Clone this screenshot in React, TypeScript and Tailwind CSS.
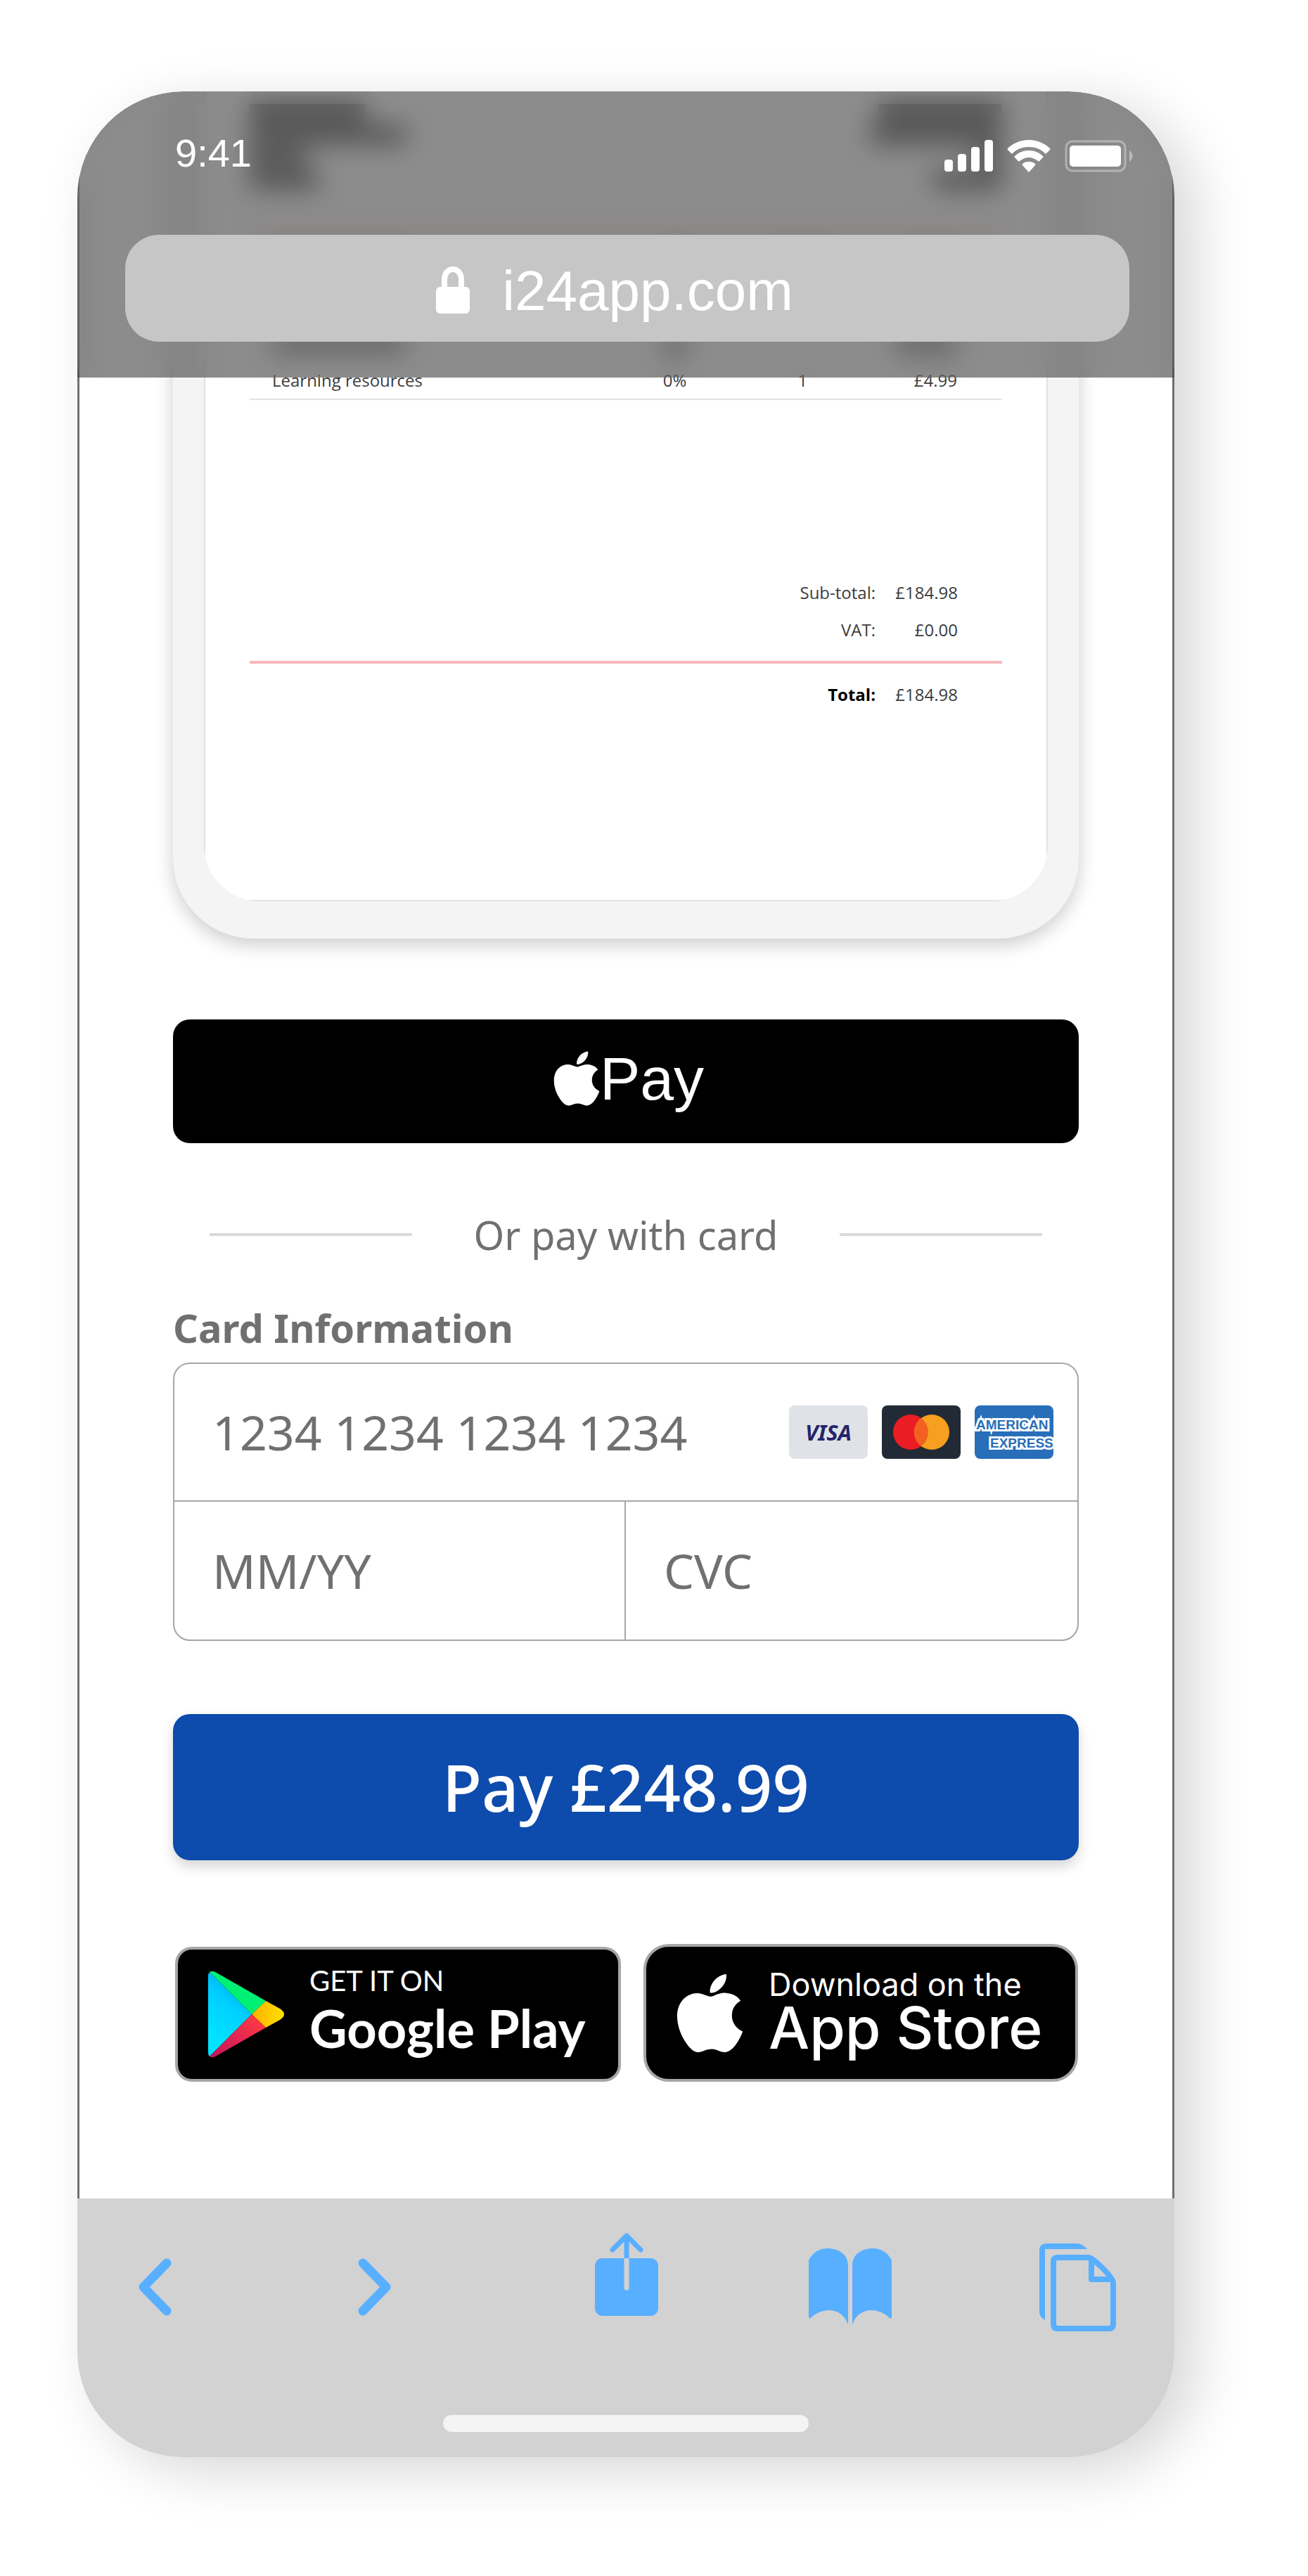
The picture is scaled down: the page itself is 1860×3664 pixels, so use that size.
import { useState } from 'react'
import { FaApple } from 'react-icons/fa'

interface InvoiceLine {
  id: string
  name: string
  vat: string
  qty: string
  amount: string
}

const lines: InvoiceLine[] = [
  { id: 'learning', name: 'Learning resources', vat: '0%', qty: '1', amount: '£4.99' },
]

function SignalIcon() {
  return (
    <svg className="h-[46px] w-[69px]" viewBox="0 0 69 46" fill="#fff" aria-hidden="true">
      <rect x="0" y="28" width="12" height="17" rx="4" />
      <rect x="19" y="20" width="12" height="25" rx="4" />
      <rect x="38" y="10" width="12" height="35" rx="4" />
      <rect x="57" y="0" width="12" height="45" rx="4" />
    </svg>
  )
}

function WifiIcon() {
  return (
    <svg className="h-[46px] w-[62px]" viewBox="0 0 62 46" fill="#fff" aria-hidden="true">
      <path d="M31 0C19 0 8 5 1 12Q0 13 1 14L6 19Q7 20 8 19C14 13 22 10 31 10C40 10 48 13 54 19Q55 20 56 19L61 14Q62 13 61 12C54 5 43 0 31 0Z" />
      <path d="M31 15C23 15 16 18 11 23Q10 24 11 25L16 30Q17 31 18 30C22 27 26 25 31 25C36 25 40 27 44 30Q45 31 46 30L51 25Q52 24 51 23C46 18 39 15 31 15Z" />
      <path d="M31 31C27 31 24 32 22 34Q21 35 22 36L30 45Q31 46 32 45L40 36Q41 35 40 34C38 32 35 31 31 31Z" />
    </svg>
  )
}

function BatteryIcon() {
  return (
    <svg className="h-[46px] w-[97px]" viewBox="0 0 97 46" fill="none" aria-hidden="true">
      <rect x="2" y="2" width="84" height="42" rx="9" stroke="#fff" strokeOpacity=".35" strokeWidth="3" />
      <rect x="7" y="8" width="73" height="30" rx="5" fill="#fff" />
      <path d="M92 15C98 19 98 27 92 31Z" fill="#fff" fillOpacity=".4" />
    </svg>
  )
}

function LockIcon() {
  return (
    <svg className="h-[68px] w-12" viewBox="0 0 48 68" fill="none" aria-hidden="true">
      <path d="M12 34V20C12 0 36 0 36 20V34" stroke="#fff" strokeWidth="8" />
      <rect x="0" y="30" width="48" height="38" rx="6" fill="#fff" />
    </svg>
  )
}

function VisaLogo() {
  return (
    <div className="flex h-[76px] w-28 items-center justify-center rounded-lg bg-[#dfe3e8]">
      <span className="text-[31px] leading-8 font-bold text-[#26246b] italic">VISA</span>
    </div>
  )
}

function MastercardLogo() {
  return (
    <svg className="h-[76px] w-28" viewBox="0 0 112 76" role="img" aria-label="Mastercard">
      <rect width="112" height="76" rx="8" fill="#222b35" />
      <circle cx="41" cy="38" r="25" fill="#eb1c24" />
      <circle cx="71" cy="38" r="25" fill="#f79f1f" />
      <path d="M56 18A25 25 0 0 1 56 58A25 25 0 0 1 56 18Z" fill="#f26122" />
    </svg>
  )
}

function AmexLogo() {
  return (
    <svg className="h-[76px] w-28" viewBox="0 0 112 76" role="img" aria-label="American Express">
      <rect width="112" height="76" rx="8" fill="#286eb8" />
      <g
        className="font-['Liberation_Sans',sans-serif] text-[19px] font-bold"
        fill="#286eb8"
        stroke="#fff"
        strokeWidth="6"
        paintOrder="stroke"
      >
        <text x="2" y="34">AMERICAN</text>
        <text x="22" y="60">EXPRESS</text>
      </g>
    </svg>
  )
}

function PlayIcon() {
  return (
    <svg className="h-[124px] w-[108px]" viewBox="0 0 108 124" aria-hidden="true">
      <defs>
        <linearGradient id="playBlue" x1="60" y1="10" x2="0" y2="90" gradientUnits="userSpaceOnUse">
          <stop offset="0" stopColor="#00a0ff" />
          <stop offset=".5" stopColor="#00d0ff" />
          <stop offset="1" stopColor="#00e3ff" />
        </linearGradient>
        <linearGradient id="playRed" x1="75" y1="68" x2="0" y2="124" gradientUnits="userSpaceOnUse">
          <stop offset="0" stopColor="#ff3a44" />
          <stop offset="1" stopColor="#c31162" />
        </linearGradient>
        <linearGradient id="playYellow" x1="108" y1="62" x2="60" y2="62" gradientUnits="userSpaceOnUse">
          <stop offset="0" stopColor="#ffe000" />
          <stop offset="1" stopColor="#ffb000" />
        </linearGradient>
      </defs>
      <path d="M2 2Q0 4 0 8V116Q0 120 2 122L62 62Z" fill="url(#playBlue)" />
      <path d="M2 2Q6 -1 12 3L82 43L62 62Z" fill="#00f076" />
      <path d="M82 43L102 54Q114 62 102 70L82 81L62 62Z" fill="url(#playYellow)" />
      <path d="M2 122Q6 125 12 121L82 81L62 62Z" fill="url(#playRed)" />
    </svg>
  )
}

function StatusBar() {
  return (
    <div className="flex h-[204px] items-start justify-between pt-14 pr-[59px] pl-[139px]">
      <span className="font-['Liberation_Sans',sans-serif] text-[56px] leading-[64px] text-white">9:41</span>
      <div className="flex h-[72px] items-center gap-5">
        <SignalIcon />
        <WifiIcon />
        <BatteryIcon />
      </div>
    </div>
  )
}

function BlurBar({ className }: { className: string }) {
  return <div className={`h-6 ${className}`} />
}

function Invoice() {
  return (
    <section className="rounded-b-[114px] bg-[#f4f4f4] px-11 pb-[53px] shadow-[0_9px_27px_rgba(0,0,0,0.2)]">
      <div className="overflow-hidden rounded-b-[80px] bg-white">
        <div className="border-x-2 border-b-2 border-[#e2e2e2] px-[63px] pt-[18px] pb-[276px] font-['Open_Sans',sans-serif] text-[24px] leading-8 text-[#3c3c3c]">
          {/* Address block, only seen through the frosted header */}
          <div className="flex justify-between" aria-hidden="true">
            <div className="flex flex-col gap-2">
              <BlurBar className="w-[165px] bg-[#7c7c7c]" />
              <BlurBar className="w-[222px] bg-[#8a8a8a]" />
              <BlurBar className="w-20 bg-[#8a8a8a]" />
              <BlurBar className="w-[98px] bg-[#8a8a8a]" />
            </div>
            <div className="flex flex-col items-end gap-2">
              <BlurBar className="w-44 bg-[#7c7c7c]" />
              <BlurBar className="w-[188px] bg-[#8a8a8a]" />
              <BlurBar className="w-10 bg-[#8a8a8a]" />
              <BlurBar className="w-[98px] bg-[#8a8a8a]" />
            </div>
          </div>

          <div className="mt-[60px] h-1 bg-[#f9a5a5]" />

          <table className="w-full table-fixed border-collapse">
            <colgroup>
              <col className="w-[48%]" />
              <col className="w-[17%]" />
              <col className="w-[17%]" />
              <col />
            </colgroup>
            <tbody>
              <tr className="h-[77px]" aria-hidden="true">
                <td className="pl-8"><BlurBar className="w-[190px] bg-[#aaa]" /></td>
                <td><BlurBar className="mx-auto w-10 bg-[#aaa]" /></td>
                <td><BlurBar className="mx-auto w-20 bg-[#aaa]" /></td>
                <td className="pr-16"><BlurBar className="ml-auto w-[70px] bg-[#aaa]" /></td>
              </tr>
              <tr className="h-[53px]">
                <td />
              </tr>
              <tr className="h-[53px]" aria-hidden="true">
                <td className="pl-8"><BlurBar className="w-[190px] bg-[#aaa]" /></td>
                <td><BlurBar className="mx-auto w-9 bg-[#aaa]" /></td>
                <td />
                <td className="pr-16"><BlurBar className="ml-auto w-[88px] bg-[#aaa]" /></td>
              </tr>
              {lines.map((line) => (
                <tr key={line.id} className="h-[53px] border-b-2 border-[#e4e4e4]">
                  <td className="pl-8">{line.name}</td>
                  <td className="text-center">{line.vat}</td>
                  <td className="text-center">{line.qty}</td>
                  <td className="pr-16 text-right">{line.amount}</td>
                </tr>
              ))}
            </tbody>
          </table>

          <dl className="mt-[258px] grid grid-cols-[1fr_117px] gap-y-[21px] pr-[63px] text-right">
            <dt>Sub-total:</dt>
            <dd>£184.98</dd>
            <dt>VAT:</dt>
            <dd>£0.00</dd>
          </dl>
          <div className="mt-7 h-1 bg-[#f9b9b9]" />
          <dl className="mt-7 grid grid-cols-[1fr_117px] pr-[63px] text-right">
            <dt className="font-bold text-black">Total:</dt>
            <dd>£184.98</dd>
          </dl>
        </div>
      </div>
    </section>
  )
}

function CardForm() {
  const [number, setNumber] = useState('')
  const [expiry, setExpiry] = useState('')
  const [cvc, setCvc] = useState('')

  const field = 'min-w-0 bg-transparent text-[68px] text-[#707070] outline-none placeholder:text-[#707070]'

  return (
    <>
      <label htmlFor="card-number" className="mt-14 block text-[56px] leading-[76px] font-bold text-[#707070]">
        Card Information
      </label>
      <div className="mt-3 rounded-3xl border-2 border-[#a6a6a6]">
        <div className="flex h-[196px] items-center gap-5 border-b-2 border-[#a6a6a6] pr-[34px] pl-[54px]">
          <input
            id="card-number"
            className={`${field} flex-1`}
            placeholder="1234 1234 1234 1234"
            value={number}
            onChange={(e) => setNumber(e.target.value)}
          />
          <VisaLogo />
          <MastercardLogo />
          <AmexLogo />
        </div>
        <div className="grid h-[196px] grid-cols-2">
          <input
            aria-label="Expiry date"
            className={`${field} border-r-2 border-[#a6a6a6] pl-[54px]`}
            placeholder="MM/YY"
            value={expiry}
            onChange={(e) => setExpiry(e.target.value)}
          />
          <input
            aria-label="Security code"
            className={`${field} pl-[54px]`}
            placeholder="CVC"
            value={cvc}
            onChange={(e) => setCvc(e.target.value)}
          />
        </div>
      </div>
    </>
  )
}

function StoreBadges() {
  return (
    <div className="mt-[119px] grid grid-cols-[634fr_618fr] items-end gap-8 pr-px pl-[3px] whitespace-nowrap text-white">
      <a
        href="#google-play"
        className="flex h-48 items-center gap-9 rounded-3xl border-4 border-[#a6a6a6] bg-black pl-[43px] font-['Lato',sans-serif]"
      >
        <PlayIcon />
        <span className="flex flex-col pb-2">
          <span className="text-[40px] leading-[48px]">GET IT ON</span>
          <span className="text-[74px] leading-[88px] font-bold">Google Play</span>
        </span>
      </a>
      <a
        href="#app-store"
        className="flex h-[196px] items-center gap-9 rounded-[36px] border-4 border-[#a6a6a6] bg-black pl-[43px] font-['Inter',sans-serif]"
      >
        <FaApple className="h-[127px] w-[95px]" />
        <span className="flex flex-col pb-1">
          <span className="text-[45px] leading-[48px]">Download on the</span>
          <span className="text-[82px] leading-[76px] font-medium">App Store</span>
        </span>
      </a>
    </div>
  )
}

function Toolbar() {
  return (
    <footer className="bg-[#d2d2d2] pb-9 text-[#58afff]">
      <nav className="grid h-[252px] grid-cols-[312fr_337fr_304fr_328fr_109fr] items-center justify-items-start pr-[83px] pl-[87px]">
        <button type="button" aria-label="Back">
          <svg className="h-[82px] w-[47px]" viewBox="0 0 47 82" fill="none" stroke="currentColor" strokeWidth="13" strokeLinecap="round" strokeLinejoin="round">
            <path d="M40 7L7 41L40 75" />
          </svg>
        </button>
        <button type="button" aria-label="Forward">
          <svg className="h-[82px] w-[47px]" viewBox="0 0 47 82" fill="none" stroke="currentColor" strokeWidth="13" strokeLinecap="round" strokeLinejoin="round">
            <path d="M7 7L40 41L7 75" />
          </svg>
        </button>
        <button type="button" aria-label="Share">
          <svg className="h-[154px] w-[90px]" viewBox="0 0 90 154" fill="none" strokeLinecap="round" strokeLinejoin="round">
            <rect x="0" y="36" width="90" height="82" rx="11" fill="currentColor" />
            <path d="M45 38V78" stroke="#d2d2d2" strokeWidth="7" />
            <path d="M45 36V5" stroke="currentColor" strokeWidth="7" strokeLinecap="butt" />
            <path d="M25 24L45 4L65 24" stroke="currentColor" strokeWidth="7" />
          </svg>
        </button>
        <button type="button" aria-label="Bookmarks">
          <svg className="h-[110px] w-[118px]" viewBox="0 0 118 110" fill="currentColor">
            <path d="M0 17C6 5 16 0 27 0C43 0 56 9 56 24V109C52 95 41 88 29 88C18 88 9 93 3 99Q0 101 0 97Z" />
            <path d="M118 17C112 5 102 0 91 0C75 0 62 9 62 24V109C66 95 77 88 89 88C100 88 109 93 115 99Q118 101 118 97Z" />
          </svg>
        </button>
        <button type="button" aria-label="Tabs">
          <svg className="h-[125px] w-[109px]" viewBox="0 0 109 125" fill="none" stroke="currentColor" strokeWidth="8">
            <path d="M0 10Q0 0 10 0H54Q60 0 68 8H8V109Q0 104 0 98Z" fill="currentColor" stroke="none" />
            <path d="M20 26Q20 20 26 20H70C76 20 105 48 105 56V115Q105 121 99 121H26Q20 121 20 115Z" />
            <path d="M74 21V51H104" strokeLinejoin="round" />
          </svg>
        </button>
      </nav>
      <div className="mx-auto mt-14 h-6 w-1/3 rounded-full bg-[#f4f4f4]" />
    </footer>
  )
}

export default function App() {
  return (
    <div className="min-h-screen bg-white pt-[130px] pr-[190px] pb-[170px] pl-[110px] font-['Noto_Sans','Open_Sans',sans-serif]">
      <div className="relative overflow-hidden rounded-[150px] shadow-[30px_20px_80px_rgba(0,0,0,0.16)]">
        {/* Browser header floats over the scrolled page */}
        <header className="absolute inset-x-0 top-0 z-10 bg-black/45 pb-[51px] backdrop-blur-[18px]">
          <StatusBar />
          <div className="mr-16 ml-[68px] flex h-[152px] items-center justify-center gap-[46px] rounded-[48px] bg-[#c6c6c6] pt-1 pr-9">
            <LockIcon />
            <span className="pt-1 font-['Liberation_Sans',sans-serif] text-[80px] leading-[92px] text-white">i24app.com</span>
          </div>
        </header>

        <main className="border-x-[3px] border-[#707070] bg-white px-[133px] pb-[166px]">
          <Invoice />

          <button
            type="button"
            aria-label="Apple Pay"
            className="mt-[115px] flex h-44 w-full items-center justify-center rounded-3xl bg-black pb-2 pl-2 text-white"
          >
            <FaApple className="h-[88px] w-[66px]" />
            <span className="font-['Liberation_Sans',sans-serif] text-[86px] leading-[100px]">Pay</span>
          </button>

          <div className="mt-[92px] flex items-center justify-between px-[52px]">
            <div className="h-1 w-72 bg-[#d9d9d9]" />
            <span className="text-[56px] leading-[76px] text-[#707070]">Or pay with card</span>
            <div className="h-1 w-72 bg-[#d9d9d9]" />
          </div>

          <CardForm />

          <button
            type="submit"
            className="mt-[104px] h-[208px] w-full rounded-3xl bg-[#0d4bac] text-[92px] font-medium text-white shadow-[0_9px_18px_rgba(0,0,0,0.16)]"
          >
            Pay £248.99
          </button>

          <StoreBadges />
        </main>

        <Toolbar />
      </div>
    </div>
  )
}
